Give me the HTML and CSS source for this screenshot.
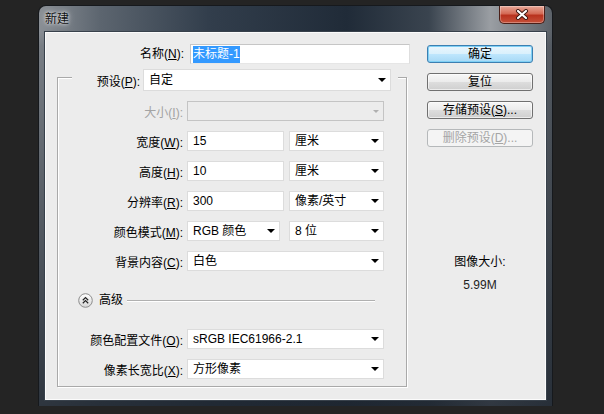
FILE: index.html
```html
<!DOCTYPE html>
<html lang="zh-CN">
<head>
  <meta charset="UTF-8">
  <title>新建</title>
  <link rel="stylesheet" href="styles.css">
</head>
<body>

  <div class="window">
    <div class="titlebar">
      <span class="title">新建</span>
      <span class="close">
        <svg width="14" height="11" viewBox="0 0 14 11">
          <path d="M3 2 L11 9 M11 2 L3 9" stroke="#3a1510" stroke-width="4" stroke-linecap="round"/>
          <path d="M3 2 L11 9 M11 2 L3 9" stroke="#fff" stroke-width="2.2" stroke-linecap="round"/>
        </svg>
      </span>
    </div>

    <div class="client">
      <div class="form">
        <div class="name-row">
          <label class="lbl name-lbl">名称(<u>N</u>):</label>
          <div class="field name-field"><span class="picked">未标题-1</span></div>
        </div>

        <div class="group">
          <div class="preset-row">
            <label class="lbl preset-lbl">预设(<u>P</u>):</label>
            <div class="field select preset-sel">自定</div>
          </div>

          <div class="row off">
            <label class="lbl">大小(<u>I</u>):</label>
            <div class="field select size-sel"></div>
          </div>

          <div class="row">
            <label class="lbl">宽度(<u>W</u>):</label>
            <div class="field num">15</div>
            <div class="field select unit">厘米</div>
          </div>

          <div class="row">
            <label class="lbl">高度(<u>H</u>):</label>
            <div class="field num">10</div>
            <div class="field select unit">厘米</div>
          </div>

          <div class="row">
            <label class="lbl">分辨率(<u>R</u>):</label>
            <div class="field num">300</div>
            <div class="field select unit">像素/英寸</div>
          </div>

          <div class="row">
            <label class="lbl">颜色模式(<u>M</u>):</label>
            <div class="field select mode">RGB 颜色</div>
            <div class="field select unit bits">8 位</div>
          </div>

          <div class="row">
            <label class="lbl">背景内容(<u>C</u>):</label>
            <div class="field select wide">白色</div>
          </div>

          <div class="advanced">
            <svg width="15" height="15" viewBox="0 0 15 15">
              <defs>
                <linearGradient id="knob" x1="0" y1="0" x2="0" y2="1">
                  <stop offset="0" stop-color="#ffffff"/>
                  <stop offset="1" stop-color="#d6d6d6"/>
                </linearGradient>
              </defs>
              <circle cx="7.5" cy="7.5" r="6.8" fill="url(#knob)" stroke="#8c8c8c"/>
              <path d="M4.8 7.2 L7.5 4.6 L10.2 7.2 M4.8 10.2 L7.5 7.6 L10.2 10.2" fill="none" stroke="#222" stroke-width="1.2"/>
            </svg>
            <span class="adv-text">高级</span>
            <span class="rule"></span>
          </div>

          <div class="row profile">
            <label class="lbl">颜色配置文件(<u>O</u>):</label>
            <div class="field select wide">sRGB IEC61966-2.1</div>
          </div>

          <div class="row">
            <label class="lbl">像素长宽比(<u>X</u>):</label>
            <div class="field select wide">方形像素</div>
          </div>
        </div>
      </div>

      <div class="side">
        <div class="btn default">确定</div>
        <div class="btn">复位</div>
        <div class="btn">存储预设(<u>S</u>)...</div>
        <div class="btn disabled">删除预设(<u>D</u>)...</div>

        <div class="imgsize">
          <div>图像大小:</div>
          <div class="imgsize-val">5.99M</div>
        </div>
      </div>
    </div>
  </div>

</body>
</html>
```

FILE: styles.css
```css
html {
  overflow: hidden;
}

body {
  margin: 0;
  padding: 6px 0 0 39px;
  background-color: #242424;
  font-family: "Liberation Sans", "Noto Sans CJK SC", sans-serif;
  font-size: 12px;
  color: #000;
}

u {
  text-decoration: underline;
  text-underline-offset: 1px;
}

/* Window frame */
.window {
  width: 513px;
  box-sizing: border-box;
  padding: 0 6px 6px;
  border-radius: 7px 7px 0 0;
  background:
    linear-gradient(to bottom, rgba(0, 0, 0, 0) 0, rgba(0, 0, 0, 0) 26px, rgba(30, 38, 48, 0.15) 40px, rgba(30, 38, 48, 0.85) 100%),
    linear-gradient(to right, #8a8f95 0%, #5c656f 12%, #323e4c 33%, #202b38 60%, #3a444f 76%, #9a9ea3 88%, #5c6269 100%);
  box-shadow: 0 0 0 1px #16191d;
}

.titlebar {
  height: 26px;
  display: flex;
  justify-content: space-between;
  align-items: flex-start;
}

.title {
  margin-top: 6px;
  line-height: 14px;
  color: #111;
  text-shadow: 0 0 6px rgba(255, 255, 255, 0.8), 0 0 3px rgba(255, 255, 255, 0.8);
}

.close {
  width: 46px;
  height: 18px;
  margin-right: 1px;
  box-sizing: border-box;
  display: flex;
  align-items: center;
  justify-content: center;
  border: 1px solid #4a1f18;
  border-top: none;
  border-radius: 0 0 5px 5px;
  background: linear-gradient(to bottom, #e8a898 0%, #d46a55 45%, #b9321e 55%, #c5513a 100%);
  box-shadow: inset 0 0 0 1px rgba(255, 255, 255, 0.3);
}

/* Client area */
.client {
  display: flex;
  height: 368px;
  box-sizing: border-box;
  padding-top: 11px;
  background-color: #ececec;
  border: 1px solid #fbfbfb;
  box-shadow: 0 0 0 1px #38414b;
}

.form {
  width: 364px;
}

.lbl {
  flex: none;
  text-align: right;
  white-space: nowrap;
}

.field {
  height: 20px;
  box-sizing: border-box;
  background-color: #fff;
  border: 1px solid #dcdcdc;
  line-height: 18px;
  padding-left: 5px;
  white-space: nowrap;
}

.select {
  display: flex;
  align-items: center;
  padding-right: 4px;
}

.select::after {
  content: "";
  margin-left: auto;
  border-left: 4px solid transparent;
  border-right: 4px solid transparent;
  border-top: 4px solid #000;
}

.name-row {
  display: flex;
  align-items: center;
  height: 20px;
  line-height: 20px;
}

.name-lbl {
  width: 138px;
}

.name-field {
  margin-left: 6px;
  width: 220px;
  padding-left: 2px;
  border-color: #c6c6c6 #dedede #e6e6e6 #c6c6c6;
}

.picked {
  background-color: #3399ff;
  color: #fff;
  padding: 1px 0 2px;
}

/* Group box */
.group {
  margin: 13px 0 0 11px;
  width: 350px;
  box-sizing: border-box;
  border: 1px solid #a9a9a9;
  box-shadow: inset 1px 1px 0 #fff, 1px 1px 0 #fff;
  padding-bottom: 7px;
}

.preset-row {
  display: flex;
  align-items: center;
  width: 326px;
  height: 22px;
  margin: -9px 0 0 14px;
  background-color: #ececec;
}

.preset-lbl {
  width: 68px;
}

.preset-sel {
  margin-left: 3px;
  width: 248px;
  height: 22px;
  line-height: 20px;
}

.row {
  display: flex;
  align-items: center;
  margin-top: 10px;
  height: 20px;
}

.row .lbl {
  width: 125px;
  margin-right: 4px;
}

.off .lbl {
  color: #a3a3a3;
}

.size-sel {
  width: 197px;
  background-color: #ececec;
  border-color: #c4c4c4;
}

.size-sel::after {
  border-top-color: #b0b0b0;
  border-left-width: 3px;
  border-right-width: 3px;
  border-top-width: 3px;
}

.num {
  width: 97px;
}

.unit {
  width: 95px;
  margin-left: 5px;
}

.mode {
  width: 93px;
}

.bits {
  margin-left: 9px;
}

.wide {
  width: 197px;
}

.advanced {
  display: flex;
  align-items: center;
  height: 16px;
  margin: 21px 31px 0 20px;
}

.adv-text {
  margin-left: 6px;
  line-height: 16px;
}

.rule {
  flex: 1;
  height: 1px;
  margin-left: 4px;
  background-color: #b0b0b0;
  box-shadow: 0 1px 0 #fff;
}

.profile {
  margin-top: 21px;
}

/* Buttons column */
.side {
  width: 106px;
  margin-left: 17px;
  padding-top: 1px;
}

.btn {
  height: 18px;
  margin-bottom: 10px;
  box-sizing: border-box;
  border: 1px solid #707070;
  border-radius: 3px;
  background: linear-gradient(to bottom, #f7f7f7 0%, #ebebeb 50%, #dddddd 51%, #cfcfcf 100%);
  box-shadow: inset 0 0 0 1px rgba(255, 255, 255, 0.6);
  text-align: center;
  line-height: 16px;
  white-space: nowrap;
}

.btn.default {
  border-color: #3c7fb1;
  background: linear-gradient(to bottom, #eaf6fd 0%, #d9f0fc 50%, #bee6fd 51%, #a7d9f5 100%);
  box-shadow: inset 0 0 0 1px #7fd0f5;
}

.btn.disabled {
  border-color: #b5b8ba;
  background: #f4f4f4;
  box-shadow: none;
  color: #a5a5a5;
}

.imgsize {
  margin-top: 108px;
  text-align: center;
  line-height: 14px;
}

.imgsize-val {
  margin-top: 9px;
  color: #222;
}
```
